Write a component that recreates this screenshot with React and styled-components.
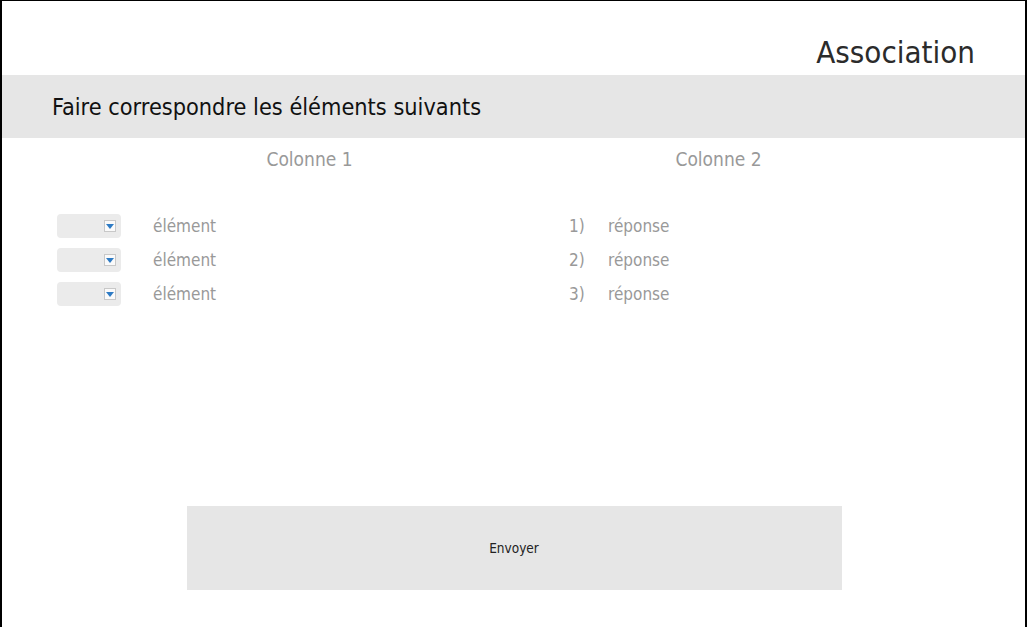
import React from "react";
import styled, { createGlobalStyle } from "styled-components";

const Global = createGlobalStyle`
  html, body { margin: 0; padding: 0; background: #fff; }
  body { font-family: Tahoma, "DejaVu Sans Condensed", "DejaVu Sans", sans-serif; font-stretch: condensed; }
`;

const Frame = styled.div`
  box-sizing: border-box;
  width: 1027px;
  height: 627px;
  border: 2px solid #000;
  border-top-width: 1px;
  border-bottom: none;
  display: flex;
  flex-direction: column;
  overflow: hidden;
`;

const TitleBar = styled.div`
  height: 74px;
  display: flex;
  align-items: flex-end;
  justify-content: flex-end;
  padding-right: 50px;
  box-sizing: border-box;
  padding-bottom: 5px;
`;

const Title = styled.h1`
  margin: 0;
  font-size: 31px;
  font-weight: normal;
  color: #2b2b2b;
  line-height: 36px;
`;

const Instruction = styled.div`
  height: 63px;
  background: #e6e6e6;
  display: flex;
  align-items: center;
  padding-left: 50px;
  font-size: 23.3px;
  color: #111;
`;

const Headers = styled.div`
  display: grid;
  grid-template-columns: 409px 409px;
  padding-left: 103px;
  margin-top: 9px;
  height: 24px;
  align-items: center;
`;

const Header = styled.div`
  text-align: center;
  font-size: 19px;
  color: #999;
`;

const Rows = styled.div`
  display: grid;
  grid-template-columns: 512px 1fr;
  padding-left: 55px;
  margin-top: 43px;
`;

const List = styled.div`
  display: flex;
  flex-direction: column;
  gap: 10px;
`;

const Row = styled.div`
  display: flex;
  align-items: center;
  height: 24px;
  gap: ${(p) => p.$gap}px;
  font-size: 17px;
  color: #999;
`;

const Select = styled.div`
  width: 64px;
  height: 24px;
  border-radius: 4px;
  background: #ebebeb;
  display: flex;
  align-items: center;
  justify-content: flex-end;
  padding-right: 5px;
  box-sizing: border-box;
`;

const ArrowBox = styled.span`
  width: 12px;
  height: 12px;
  box-sizing: border-box;
  border: 1px solid #c8c8c8;
  background: #fafafa;
  display: flex;
  align-items: center;
  justify-content: center;
`;

const Num = styled.span`
  width: 18px;
`;

const Footer = styled.div`
  flex: 1;
  display: flex;
  justify-content: center;
  align-items: flex-start;
  padding-top: 200px;
`;

const Button = styled.button`
  width: 655px;
  height: 84px;
  margin-left: 1px;
  border: none;
  background: #e6e6e6;
  font-family: inherit;
  font-stretch: condensed;
  font-size: 13.5px;
  color: #222;
`;

const Arrow = () => (
  <ArrowBox>
    <svg width="8" height="5" viewBox="0 0 8 5">
      <path d="M0 0 H8 L4 5 Z" fill="#2e7bc4" />
    </svg>
  </ArrowBox>
);

export default function App() {
  const items = [1, 2, 3];
  return (
    <>
      <Global />
      <Frame>
        <TitleBar>
          <Title>Association</Title>
        </TitleBar>
        <Instruction>Faire correspondre les éléments suivants</Instruction>
        <Headers>
          <Header>Colonne 1</Header>
          <Header>Colonne 2</Header>
        </Headers>
        <Rows>
          <List>
            {items.map((n) => (
              <Row key={n} $gap={32}>
                <Select>
                  <Arrow />
                </Select>
                <span>élément</span>
              </Row>
            ))}
          </List>
          <List>
            {items.map((n) => (
              <Row key={n} $gap={21}>
                <Num>{n})</Num>
                <span>réponse</span>
              </Row>
            ))}
          </List>
        </Rows>
        <Footer>
          <Button>Envoyer</Button>
        </Footer>
      </Frame>
    </>
  );
}
